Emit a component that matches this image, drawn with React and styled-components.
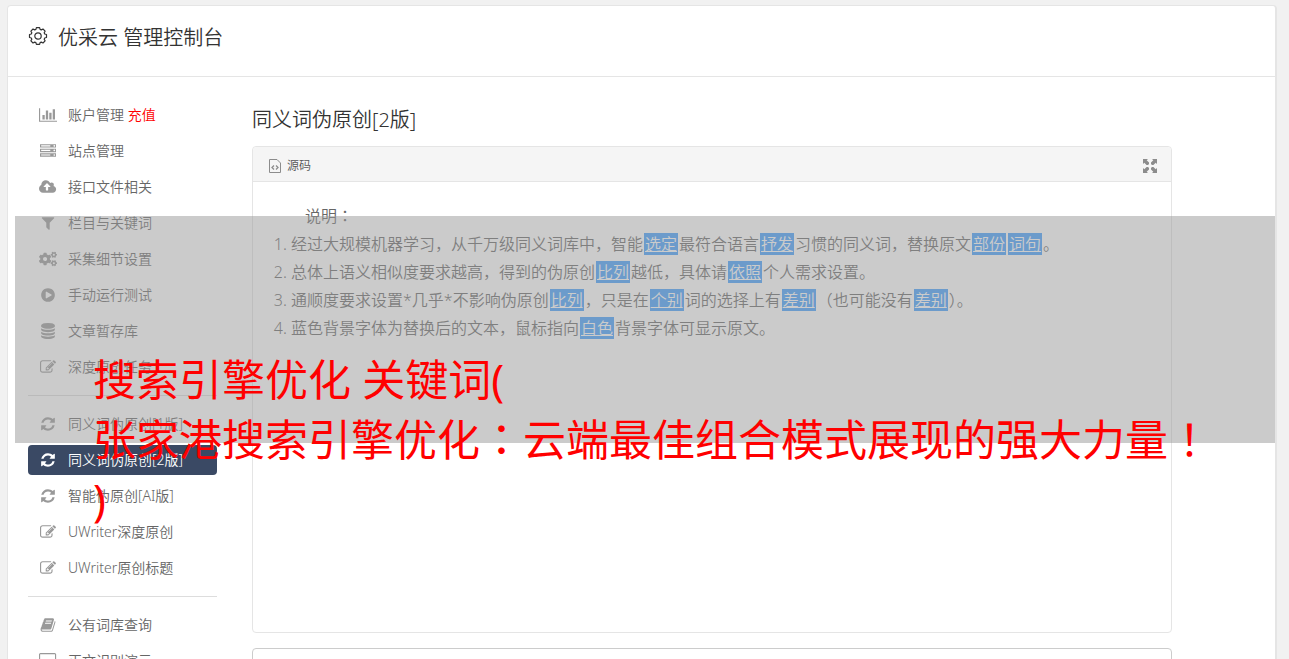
import styled, { createGlobalStyle } from 'styled-components';
import { FaCogs } from 'react-icons/fa';

const paths = {
    chart: { width: 2048, d: "M640 896v512h-256v-512h256zm384-512v1024h-256v-1024h256zm1024 1152v128h-2048v-1536h128v1408h1920zm-640-896v768h-256v-768h256zm384-384v1152h-256v-1152h256z" },
    server: { width: 1792, d: "M128 1408h1024v-128h-1024v128zm0-512h1024v-128h-1024v128zm1568 448q0-40-28-68t-68-28-68 28-28 68 28 68 68 28 68-28 28-68zm-1568-960h1024v-128h-1024v128zm1568 448q0-40-28-68t-68-28-68 28-28 68 28 68 68 28 68-28 28-68zm0-512q0-40-28-68t-68-28-68 28-28 68 28 68 68 28 68-28 28-68zm96 832v384h-1792v-384h1792zm0-512v384h-1792v-384h1792zm0-512v384h-1792v-384h1792z" },
    upload: { width: 1920, d: "M1280 864q0-14-9-23l-352-352q-9-9-23-9t-23 9l-351 351q-10 12-10 24 0 14 9 23t23 9h224v352q0 13 9.5 22.5t22.5 9.5h192q13 0 22.5-9.5t9.5-22.5v-352h224q13 0 22.5-9.5t9.5-22.5zm640 288q0 159-112.5 271.5t-271.5 112.5h-1088q-185 0-316.5-131.5t-131.5-316.5q0-130 70-240t188-165q-2-30-2-43 0-212 150-362t362-150q156 0 285.5 87t188.5 231q71-62 166-62 106 0 181 75t75 181q0 76-41 138 130 31 213.5 135.5t83.5 238.5z" },
    filter: { width: 1792, d: "M1595 295q17 41-14 70l-493 493v742q0 42-39 59-13 5-25 5-27 0-45-19l-256-256q-19-19-19-45v-486l-493-493q-31-29-14-70 17-39 59-39h1280q42 0 59 39z" },
    play: { width: 1792, d: "M896 128q209 0 385.5 103t279.5 279.5 103 385.5-103 385.5-279.5 279.5-385.5 103-385.5-103-279.5-279.5-103-385.5 103-385.5 279.5-279.5 385.5-103zm384 823q32-18 32-55t-32-55l-544-320q-31-19-64-1-32 19-32 56v640q0 37 32 56 16 8 32 8 17 0 32-9z" },
    database: { width: 1792, d: "M896 768q237 0 443-43t325-127v170q0 69-103 128t-280 93.5-385 34.5-385-34.5-280-93.5-103-128v-170q119 84 325 127t443 43zm0 768q237 0 443-43t325-127v170q0 69-103 128t-280 93.5-385 34.5-385-34.5-280-93.5-103-128v-170q119 84 325 127t443 43zm0-384q237 0 443-43t325-127v170q0 69-103 128t-280 93.5-385 34.5-385-34.5-280-93.5-103-128v-170q119 84 325 127t443 43zm0-1152q208 0 385 34.5t280 93.5 103 128v128q0 69-103 128t-280 93.5-385 34.5-385-34.5-280-93.5-103-128v-128q0-69 103-128t280-93.5 385-34.5z" },
    edit: { width: 1792, d: "M888 1184l116-116-152-152-116 116v56h96v96h56zm440-720q-16-16-33 1l-350 350q-17 17-1 33t33-1l350-350q17-17 1-33zm80 594v190q0 119-84.5 203.5t-203.5 84.5h-832q-119 0-203.5-84.5t-84.5-203.5v-832q0-119 84.5-203.5t203.5-84.5h832q63 0 117 25 15 7 18 23 3 17-9 29l-49 49q-14 14-32 8-23-6-45-6h-832q-66 0-113 47t-47 113v832q0 66 47 113t113 47h832q66 0 113-47t47-113v-126q0-13 9-22l64-64q15-15 35-7t20 29zm-96-738l288 288-672 672h-288v-288zm444 132l-92 92-288-288 92-92q28-28 68-28t68 28l152 152q28 28 28 68t-28 68z" },
    refresh: { width: 1792, d: "M1639 1056q0 5-1 7-64 268-268 434.5t-478 166.5q-146 0-282.5-55t-243.5-157l-129 129q-19 19-45 19t-45-19-19-45v-448q0-26 19-45t45-19h448q26 0 45 19t19 45-19 45l-137 137q71 66 161 102t187 36q134 0 250-65t186-179q11-17 53-117 8-23 30-23h192q13 0 22.5 9.5t9.5 22.5zm25-800v448q0 26-19 45t-45 19h-448q-26 0-45-19t-19-45 19-45l138-138q-148-137-349-137-134 0-250 65t-186 179q-11 17-53 117-8 23-30 23h-199q-13 0-22.5-9.5t-9.5-22.5v-7q65-268 270-434.5t480-166.5q146 0 284 55.5t245 156.5l130-129q19-19 45-19t45 19 19 45z" },
    book: { width: 1792, d: "M1703 478q40 57 18 129l-275 906q-19 64-76.5 107.5t-122.5 43.5h-923q-77 0-148.5-53.5t-99.5-131.5q-24-67-2-127 0-4 3-27t4-37q1-8-3-21.5t-3-19.5q2-11 8-21t16.5-23.5 16.5-23.5q23-38 45-91.5t30-91.5q3-10 .5-30t-.5-28q3-11 17-28t17-23q21-36 42-92t25-90q1-9-2.5-32t.5-28q4-13 22-30.5t22-22.5q19-26 42.5-84.5t27.5-96.5q1-8-3-25.5t-2-26.5q2-8 9-18t18-23 17-21q8-12 16.5-30.5t15-35 16-36 19.5-32 26.5-23.5 36-11.5 47.5 5.5l-1 3q38-9 51-9h761q74 0 114 56t18 130l-274 906q-36 119-71.5 153.5t-128.5 34.5h-869q-27 0-38 15-11 16-1 43 24 70 144 70h923q29 0 56-15.5t35-41.5l300-987q7-22 5-57 38 15 59 43zm-1064 2q-4 13 2 22.5t20 9.5h608q13 0 25.5-9.5t16.5-22.5l21-64q4-13-2-22.5t-20-9.5h-608q-13 0-25.5 9.5t-16.5 22.5zm-83 256q-4 13 2 22.5t20 9.5h608q13 0 25.5-9.5t16.5-22.5l21-64q4-13-2-22.5t-20-9.5h-608q-13 0-25.5 9.5t-16.5 22.5z" },
    desktop: { width: 1920, d: "M1792 992v-832q0-13-9.5-22.5t-22.5-9.5h-1600q-13 0-22.5 9.5t-9.5 22.5v832q0 13 9.5 22.5t22.5 9.5h1600q13 0 22.5-9.5t9.5-22.5zm128-832v1088q0 66-47 113t-113 47h-544q0 37 16 77.5t32 71 16 43.5q0 26-19 45t-45 19h-512q-26 0-45-19t-19-45q0-14 16-44t32-70 16-78h-544q-66 0-113-47t-47-113v-1088q0-66 47-113t113-47h1600q66 0 113 47t47 113z" },
};

const groups = [
    [
        { icon: "chart", label: "账户管理", extra: "充值" },
        { icon: "server", label: "站点管理" },
        { icon: "upload", label: "接口文件相关" },
        { icon: "filter", label: "栏目与关键词" },
        { icon: "cogs", label: "采集细节设置" },
        { icon: "play", label: "手动运行测试" },
        { icon: "database", label: "文章暂存库" },
        { icon: "edit", label: "深度原创任务" },
    ],
    [
        { icon: "refresh", label: "同义词伪原创[1版]" },
        { icon: "refresh", label: "同义词伪原创[2版]", active: true },
        { icon: "refresh", label: "智能伪原创[AI版]" },
        { icon: "edit", label: "UWriter深度原创" },
        { icon: "edit", label: "UWriter原创标题" },
    ],
    [
        { icon: "book", label: "公有词库查询" },
        { icon: "desktop", label: "正文识别演示" },
    ],
];

function MenuIcon({ name }) {
    if (name === "cogs") {
        return <FaCogs size={18} />;
    }
    const { width, d } = paths[name];
    return <svg height="16" viewBox={`0 0 ${width} 1792`} fill="currentColor" aria-hidden="true"><path d={d} /></svg>;
}

function GearIcon() {
    return (
        <svg width="20" height="20" viewBox="0 0 20 20" fill="none" stroke="currentColor" strokeWidth="1.2" aria-hidden="true">
            <path strokeLinejoin="round" d="M8.4 1.6h3.2l.5 1.8 1.2.5 1.7-.9 2.1 2.1-.9 1.7.5 1.2 1.8.5v3l-1.8.5-.5 1.2.9 1.7-2.1 2.1-1.7-.9-1.2.5-.5 1.8H8.4l-.5-1.8-1.2-.5-1.7.9-2.1-2.1.9-1.7-.5-1.2-1.8-.5v-3l1.8-.5.5-1.2-.9-1.7L5 3l1.7.9 1.2-.5z" />
            <circle cx="10" cy="10" r="3.2" />
        </svg>
    );
}

function FileIcon() {
    return (
        <svg width="12" height="14" viewBox="0 0 12 14" fill="none" stroke="currentColor" aria-hidden="true">
            <path d="M.5.5h7.5l3.5 3.5v9.500h-11z" />
            <path strokeWidth="1.3" d="M5 6.500L3 8.500l2 2M7 6.500l2 2-2 2" />
        </svg>
    );
}

function ExpandIcon() {
    return (
        <svg width="14" height="14" viewBox="0 0 14 14" fill="currentColor" aria-hidden="true">
            <path d="M0 0h5L3.700 1.300 6 3.600V5L5 6H3.600L1.300 3.700 0 5zM14 0v5l-1.300-1.300L10.400 6H9L8 5V3.600l2.300-2.300L9 0zM0 14V9l1.300 1.300L3.600 8H5l1 1v1.400l-2.300 2.300L5 14zM14 14H9l1.300-1.300L8 10.400V9l1-1h1.400l2.300 2.300L14 9z" />
        </svg>
    );
}

export default function App() {
    return (
        <>
            <GlobalStyle />
            <Card>
                <Header>
                    <GearIcon />
                    <h1>优采云 管理控制台</h1>
                </Header>
                <Columns>
                    <Sidebar>
                        {groups.map((items, index) => (
                            <Group key={index}>
                                {items.map((item) => (
                                    <li key={item.label}>
                                        <MenuLink href="#" $active={item.active}>
                                            <IconBox><MenuIcon name={item.icon} /></IconBox>
                                            <span>{item.label}{item.extra && <Recharge> {item.extra}</Recharge>}</span>
                                        </MenuLink>
                                    </li>
                                ))}
                            </Group>
                        ))}
                    </Sidebar>
                    <Main>
                        <Title>同义词伪原创[2版]</Title>
                        <Panel>
                            <Toolbar>
                                <ToolButton type="button"><FileIcon />源码</ToolButton>
                                <ToolButton type="button" aria-label="全屏"><ExpandIcon /></ToolButton>
                            </Toolbar>
                            <Editor>
                                <Intro>说明<Centered>：</Centered></Intro>
                                <Rules>
                                    <li>经过大规模机器学习，从千万级同义词库中，智能<Word>选定</Word>最符合语言<Word>抒发</Word>习惯的同义词，替换原文<Word>部份</Word><Word>词句</Word>。</li>
                                    <li>总体上语义相似度要求越高，得到的伪原创<Word>比列</Word>越低，具体请<Word>依照</Word>个人需求设置。</li>
                                    <li>通顺度要求设置*几乎*不影响伪原创<Word>比列</Word>，只是在<Word>个别</Word>词的选择上有<Word>差别</Word>（也可能没有<Word>差别</Word>）。</li>
                                    <li>蓝色背景字体为替换后的文本，鼠标指向<Word>白色</Word>背景字体可显示原文。</li>
                                </Rules>
                            </Editor>
                        </Panel>
                        <Source aria-label="原文" />
                    </Main>
                </Columns>
            </Card>
            <Banner>
                <p>搜索引擎优化 关键词(</p>
                <p>张家港搜索引擎优化<Centered>：</Centered>云端最佳组合模式展现的强大力量<Centered>！</Centered></p>
                <p>)</p>
            </Banner>
        </>
    );
}

const GlobalStyle = createGlobalStyle`
    * {
        box-sizing: border-box;
        margin: 0;
        padding: 0;
    }
    html {
        scrollbar-width: none;
    }
    body {
        position: relative;
        padding: 5px 12px 20px 7px;
        background: #f1f1f1;
        color: #666666;
        font-family: 'Noto Sans', 'Noto Sans CJK SC', sans-serif;
        font-size: 14px;
        font-weight: 350;
    }
    h1, h2 {
        font-size: 20px;
        line-height: 28px;
        font-weight: 350;
        color: #333333;
    }
    ul {
        list-style: none;
    }
`;

const Card = styled.div`
    background: #ffffff;
    border: 1px solid #e5e5e5;
    border-right-width: 2px;
    border-radius: 4px;
`;

const Header = styled.header`
    display: flex;
    align-items: flex-start;
    gap: 10px;
    padding: 18px 20px 24px;
    border-bottom: 1px solid #e5e5e5;
    color: #333333;
    svg {
        margin-top: 2px;
    }
`;

const Columns = styled.div`
    display: flex;
    gap: 35px;
    padding: 23px 103px 20px 20px;
`;

const Sidebar = styled.nav`
    flex: 0 0 189px;
`;

const Group = styled.ul`
    display: flex;
    flex-direction: column;
    gap: 6px;
    & + & {
        margin-top: 13px;
        padding-top: 13px;
        border-top: 1px solid #dddddd;
    }
`;

const MenuLink = styled.a`
    display: flex;
    align-items: center;
    gap: 10px;
    height: 30px;
    padding: 0 10px;
    border-radius: 4px;
    line-height: 20px;
    text-decoration: none;
    background: ${props => props.$active ? "#3a4964" : "transparent"};
    color: ${props => props.$active ? "#ffffff" : "#666666"};
    svg {
        color: ${props => props.$active ? "#ffffff" : "#999999"};
    }
`;

const IconBox = styled.span`
    display: flex;
    justify-content: center;
    width: 20px;
`;

const Recharge = styled.span`
    color: #ff0000;
`;

const Main = styled.main`
    flex: 1;
    min-width: 0;
    padding-top: 6px;
`;

const Title = styled.h2`
    margin-bottom: 12px;
`;

const Panel = styled.section`
    border: 1px solid #e5e5e5;
    border-radius: 4px;
`;

const Toolbar = styled.div`
    display: flex;
    justify-content: space-between;
    align-items: center;
    height: 35px;
    padding: 3px 14px 0 16px;
    background: #f5f5f5;
    border-bottom: 1px solid #e5e5e5;
    border-radius: 4px 4px 0 0;
`;

const ToolButton = styled.button`
    display: flex;
    align-items: center;
    gap: 6px;
    border: none;
    background: none;
    color: #555555;
    font-family: inherit;
    font-size: 12px;
    font-weight: inherit;
    line-height: 20px;
    svg {
        color: #8c8c8c;
    }
`;

const Editor = styled.div`
    min-height: 450px;
    padding: 20px;
    font-size: 16px;
    line-height: 28px;
`;

const Intro = styled.p`
    text-indent: 2em;
`;

const Rules = styled.ol`
    padding-left: 18px;
`;

const Word = styled.u`
    margin: 0 1px;
    padding: 0 1px;
    background: #409eff;
    color: #ffffff;
`;

// full-width marks that sit in the middle of their cell
const Centered = styled.span`
    font-family: 'Noto Sans CJK TC', sans-serif;
    line-height: 0;
`;

const Source = styled.textarea`
    display: block;
    width: 100%;
    height: 120px;
    margin-top: 15px;
    border: 1px solid #cccccc;
    border-radius: 4px;
    background: #ffffff;
    resize: none;
`;

const Banner = styled.div`
    position: absolute;
    top: 216px;
    left: 15px;
    right: 14px;
    height: 227px;
    padding: 134px 0 0 78px;
    background: rgba(151, 151, 151, 0.5);
    color: #ff0000;
    font-size: 43px;
    font-weight: 400;
    line-height: 60px;
    white-space: nowrap;
`;
